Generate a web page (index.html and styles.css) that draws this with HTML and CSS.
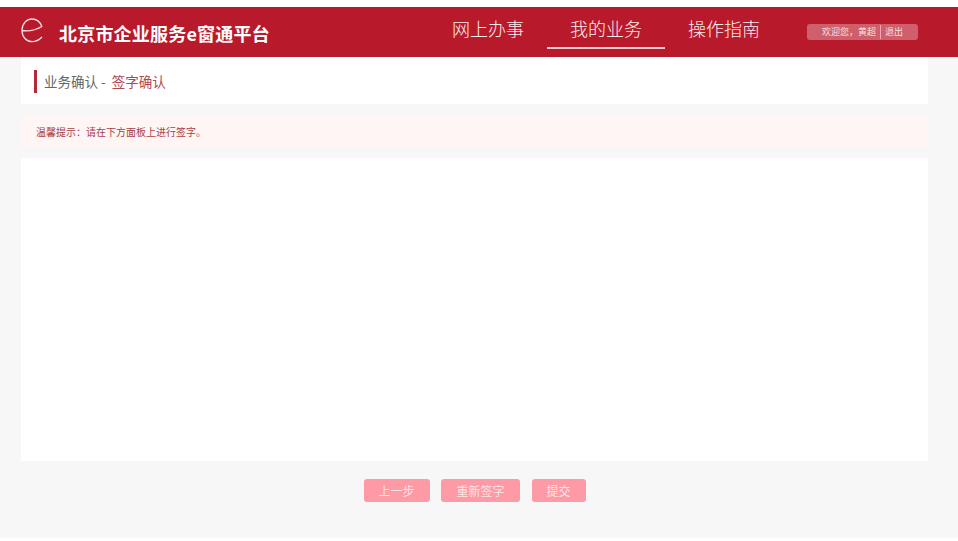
FILE: index.html
```html
<!doctype html>
<html lang="zh-CN">
  <head>
    <meta charset="UTF-8" />
    <title>北京市企业服务e窗通平台</title>
    <link rel="stylesheet" href="styles.css">
  </head>
  <body>
    <header class="header">
      <div class="logo">
        <svg class="logo-icon" width="22" height="25" viewBox="0 0 22 25" fill="none">
          <path d="M1.2 12.5 C8 13.5 15 12 20.8 8.5 C19 3.5 15.5 1 11 1 C5.2 1 1 6 1 12.5 C1 19 5.5 23.7 11 23.7 C15 23.7 18 22.2 21 19" stroke="#f6dfe1" stroke-width="1.3" />
        </svg>
        <span class="logo-text">北京市企业服务e窗通平台</span>
      </div>
      <nav class="nav">
        <a class="nav-item">网上办事</a>
        <a class="nav-item active">我的业务</a>
        <a class="nav-item">操作指南</a>
      </nav>
      <div class="user-box">
        <span class="user-name">欢迎您，黄超</span>
        <span class="user-exit">退出</span>
      </div>
    </header>

    <main class="content">
      <div class="crumb">
        <span class="crumb-text">业务确认 - <em>签字确认</em></span>
      </div>
      <div class="notice">温馨提示：请在下方面板上进行签字。</div>
      <div class="sign-panel"></div>
      <div class="actions">
        <button type="button" class="btn btn-prev">上一步</button>
        <button type="button" class="btn btn-reset">重新签字</button>
        <button type="button" class="btn btn-submit">提交</button>
      </div>
    </main>
  </body>
</html>
```

FILE: styles.css
```css
* {
  box-sizing: border-box;
}

html,
body {
  height: 100%;
}

body {
  margin: 0;
  padding: 7px 0 3px;
  font-family: "Noto Sans CJK SC", "Noto Sans", sans-serif;
  background-color: #fff;
  display: flex;
  flex-direction: column;
  overflow: hidden;
}

.header {
  height: 50px;
  flex-shrink: 0;
  background-color: #b91a2b;
  color: #fff;
  display: flex;
  align-items: center;
  padding-left: 21px;
}

.logo {
  width: 408px;
  display: flex;
  align-items: center;
}

.logo-icon {
  margin-right: 16px;
  margin-top: -3px;
}

.logo-text {
  font-size: 18px;
  font-weight: 700;
  letter-spacing: 0.2px;
  line-height: 50px;
  padding-top: 1px;
}

.nav {
  display: flex;
  height: 50px;
}

.nav-item {
  width: 118px;
  height: 42px;
  text-align: center;
  font-size: 18px;
  line-height: 43px;
  color: #fbeced;
  font-weight: 300;
}

.nav-item.active {
  border-bottom: 2px solid #f9c9cd;
}

.user-box {
  width: 111px;
  height: 16px;
  margin-left: 24px;
  padding-left: 15px;
  display: flex;
  align-items: center;
  background-color: rgba(255, 255, 255, 0.3);
  border-radius: 3px;
  font-size: 9px;
  line-height: 16px;
  color: #f5e0e2;
}

.user-name {
  width: 58px;
  white-space: nowrap;
}

.user-exit {
  border-left: 1px solid #f7a8b0;
  padding-left: 4px;
  height: 14px;
  line-height: 14px;
}

.content {
  flex: 1;
  background-color: #f7f7f8;
  padding: 0 30px 0 21px;
  display: flex;
  flex-direction: column;
}

.crumb {
  height: 47px;
  flex-shrink: 0;
  background-color: #fff;
  padding: 13px 0 0 13px;
}

.crumb-text {
  display: block;
  height: 23px;
  border-left: 3px solid #b5283a;
  padding-left: 7px;
  font-size: 13.5px;
  line-height: 23px;
  color: #666;
}

.crumb-text em {
  font-style: normal;
  color: #b0474f;
  margin-left: 3px;
}

.notice {
  height: 32px;
  flex-shrink: 0;
  margin-top: 11px;
  padding-left: 15px;
  background-color: #fff5f4;
  font-size: 10px;
  line-height: 34px;
  color: #a8404a;
}

.sign-panel {
  height: 303px;
  flex-shrink: 0;
  margin-top: 11px;
  background-color: #fff;
}

.actions {
  display: flex;
  justify-content: center;
  gap: 11.5px;
  margin-top: 18px;
}

.btn {
  height: 23px;
  padding: 0;
  background-color: #fe9aa5;
  color: #fde6e8;
  border: none;
  border-radius: 3px;
  font-family: inherit;
  font-size: 12px;
  line-height: 23px;
}

.btn-prev {
  width: 66px;
}

.btn-reset {
  width: 79px;
}

.btn-submit {
  width: 54px;
}
```
